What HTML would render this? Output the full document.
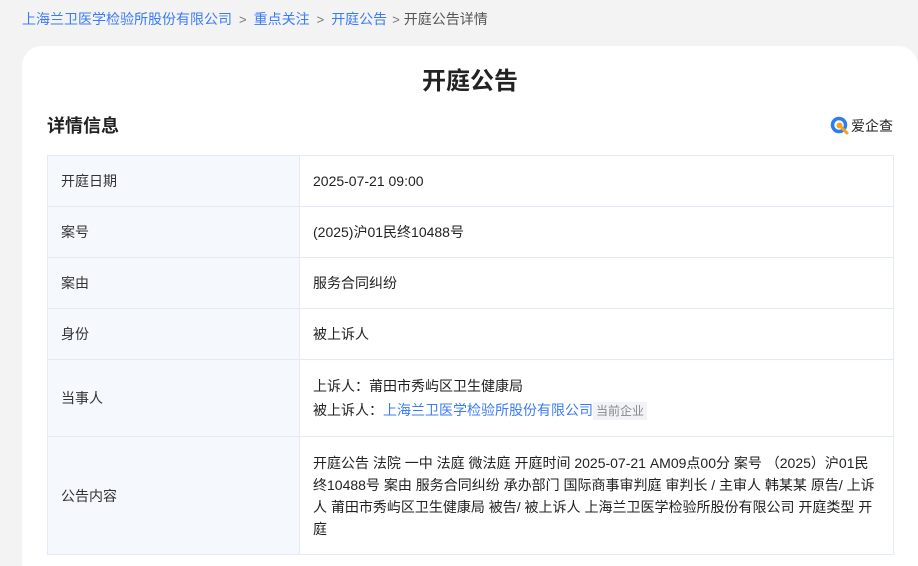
<!DOCTYPE html>
<html><head><meta charset="utf-8"><style>
body{margin:0;background:#f3f3f3;font-family:"Liberation Sans","Noto Sans CJK SC",sans-serif;width:918px;height:546px;overflow:hidden;position:relative;color:#222}
.bc{position:absolute;left:22px;top:9px;font-size:14px;line-height:20px;color:#555}
.bc a{color:#3b7cf6;text-decoration:none}
.bc .s{color:#777;margin:0 7px;font-size:13px}
.card{position:absolute;left:22px;top:46px;width:896px;height:520px;background:#fff;border-radius:20px 20px 0 0}
h1{position:absolute;left:0;width:940px;top:67px;margin:0;text-align:center;font-size:24px;line-height:30px;font-weight:bold;color:#222}
h2{position:absolute;left:47px;top:114px;margin:0;font-size:18px;line-height:24px;font-weight:bold;color:#222}
.logo{position:absolute;left:830px;top:116px;font-size:14px;line-height:20px;color:#222;display:flex;align-items:center}
table{position:absolute;left:47px;top:155px;width:847px;border-collapse:collapse;font-size:14px}
td{border:1px solid #e3eaf5;padding:0 13px;vertical-align:middle;color:#222}
td.l{width:225px;background:#f5f8fd;color:#333}
.b{color:#3b7cf6}
.tag{background:#f1f3f6;color:#888;font-size:12px;padding:2px 3px}
</style></head><body>
<div class="bc"><a>上海兰卫医学检验所股份有限公司</a><span class="s">&gt;</span><a>重点关注</a><span class="s">&gt;</span><a>开庭公告</a><span class="s" style="margin:0 4px 0 5px">&gt;</span>开庭公告详情</div>
<div class="card"></div>
<h1>开庭公告</h1>
<h2>详情信息</h2>
<div class="logo"><svg width="20" height="20" viewBox="0 0 20 20"><circle cx="9" cy="9" r="6.5" fill="none" stroke="#2a7bf5" stroke-width="3.5"/><circle cx="9.5" cy="9.5" r="3" fill="#f7a11a"/><path d="M12 12l5 5" stroke="#f7a11a" stroke-width="3" stroke-linecap="round"/></svg><span style="margin-left:1px">爱企查</span></div>
<table>
<tr style="height:51px"><td class="l">开庭日期</td><td>2025-07-21 09:00</td></tr>
<tr style="height:51px"><td class="l">案号</td><td>(2025)沪01民终10488号</td></tr>
<tr style="height:51px"><td class="l">案由</td><td>服务合同纠纷</td></tr>
<tr style="height:51px"><td class="l">身份</td><td>被上诉人</td></tr>
<tr style="height:77px"><td class="l">当事人</td><td style="line-height:24px">上诉人：莆田市秀屿区卫生健康局<br>被上诉人：<span class="b">上海兰卫医学检验所股份有限公司</span><span class="tag">当前企业</span></td></tr>
<tr style="height:118px"><td class="l">公告内容</td><td style="line-height:22px;padding-top:0">开庭公告 法院 一中 法庭 微法庭 开庭时间 2025-07-21 AM09点00分 案号 （2025）沪01民终10488号 案由 服务合同纠纷 承办部门 国际商事审判庭 审判长 / 主审人 韩某某 原告/ 上诉人 莆田市秀屿区卫生健康局 被告/ 被上诉人 上海兰卫医学检验所股份有限公司 开庭类型 开庭</td></tr>
</table>
</body></html>
